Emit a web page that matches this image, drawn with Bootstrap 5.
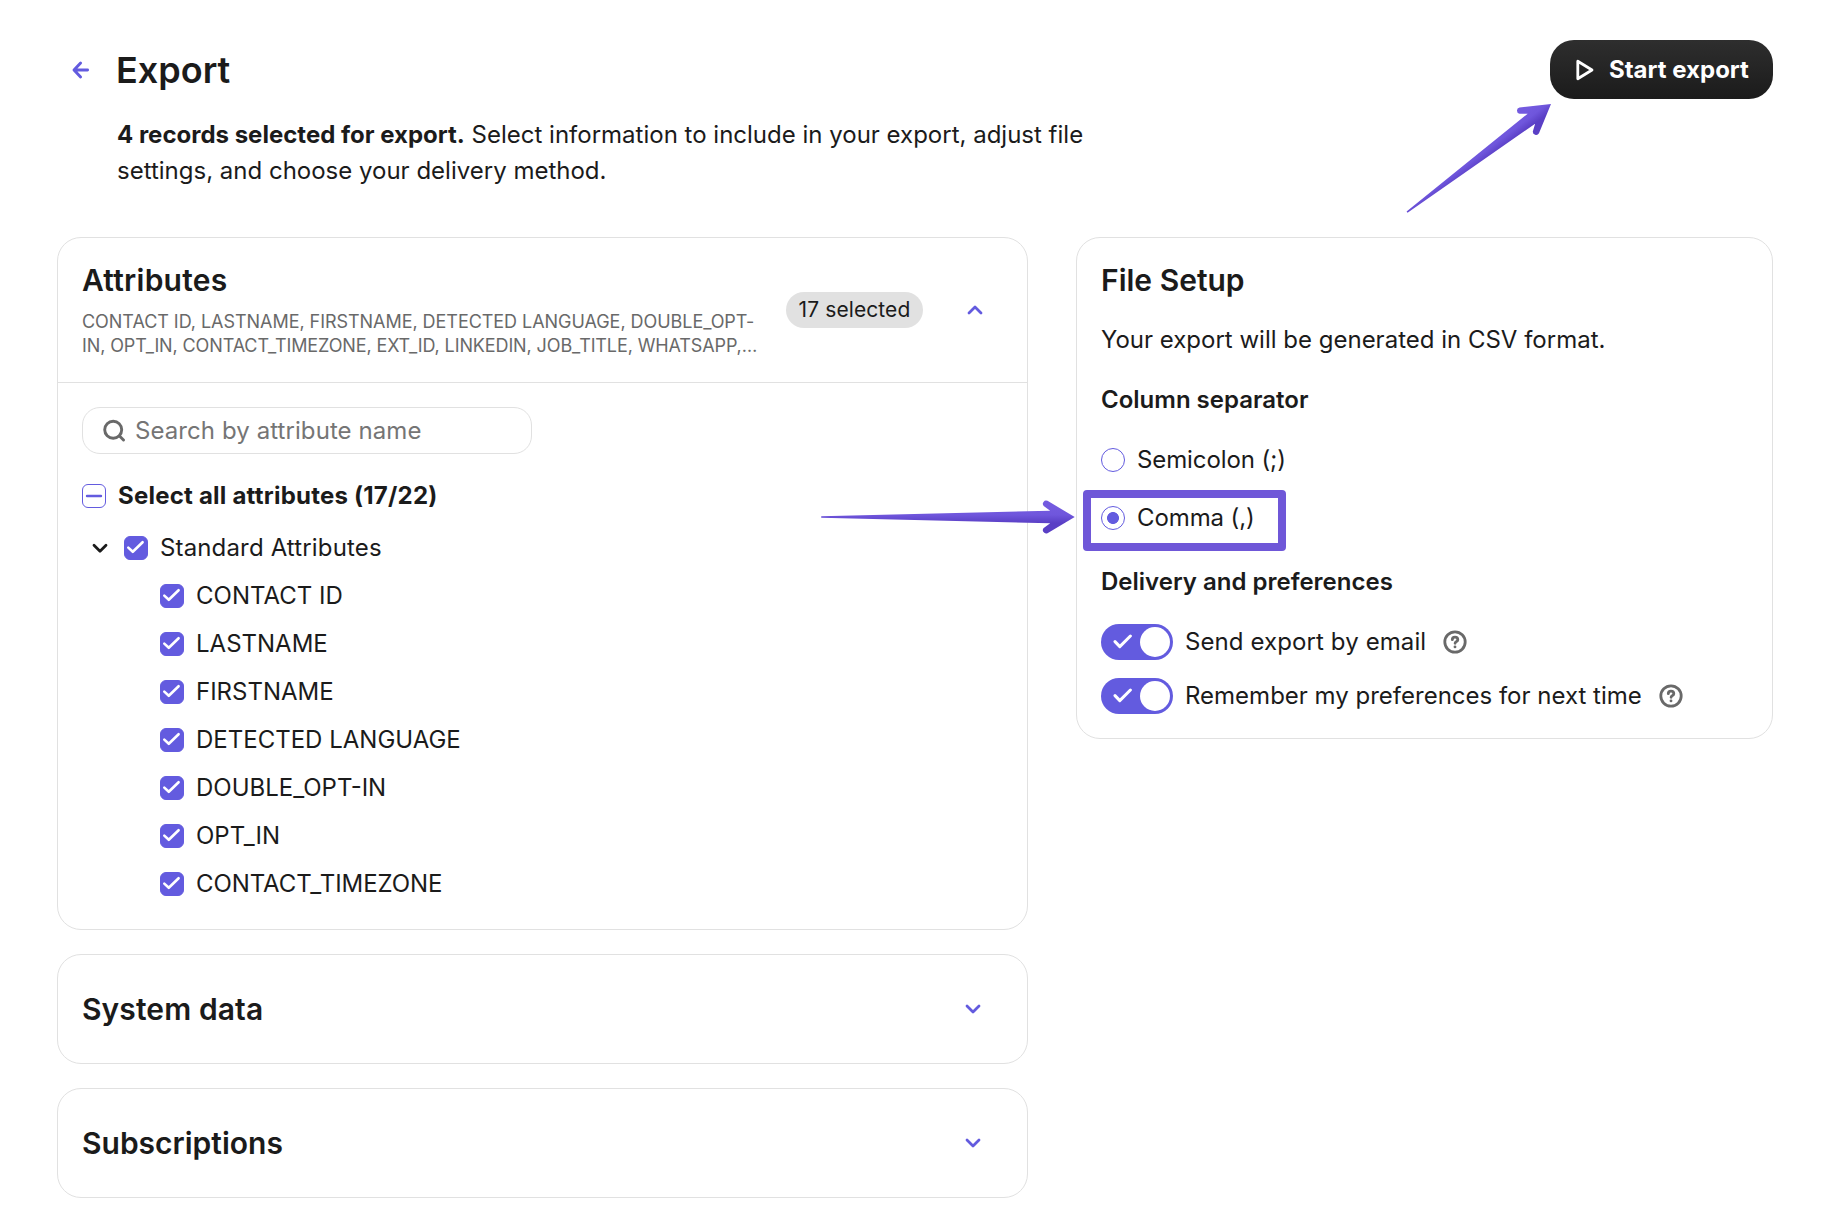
<!DOCTYPE html>
<html lang="en">
<head>
<meta charset="utf-8">
<meta name="viewport" content="width=device-width, initial-scale=1">
<title>Export</title>
<link href="https://cdn.jsdelivr.net/npm/bootstrap@5.3.0/dist/css/bootstrap.min.css" rel="stylesheet">
<style>
  :root { --brand: #635bdf; --ink: #1b1b1b; --muted: #696969; --line: #e1e1e1; }
  body { font-family: Inter, "Liberation Sans", sans-serif; font-size: 24px; line-height: 36px; color: var(--ink); background: #fff; }
  svg { display: block; flex: none; }
  .page { width: 1830px; height: 1220px; padding: 40px 57px 0; overflow: hidden; }
  .top-bar { height: 197px; }
  .back-link { margin: 20px 0 0 14px; color: var(--brand); }
  .intro { margin-left: 25px; width: 1000px; }
  .intro p { padding-left: 1px; }
  .page-title { font-size: 36px; line-height: 60px; font-weight: 600; margin: 0 0 17px; }
  .btn-start { --bs-btn-color: #fff; --bs-btn-border-width: 0; width: 223px; height: 59px; padding: 0 0 0 26px; gap: 15px; border-radius: 24px; font-size: 24px; font-weight: 700; background: linear-gradient(#2e2e2e, #1b1b1b); }
  .panel { --bs-card-border-color: var(--line); --bs-card-border-radius: 24px; --bs-card-inner-border-radius: 23px; }
  .col-main { width: 971px; gap: 24px; }
  .col-side { width: 697px; }
  .panel-title { font-size: 30px; line-height: 36px; font-weight: 600; margin: 0; }
  .panel-head { height: 144px; padding: 0 40px 0 24px; }
  .head-text { width: 690px; padding-top: 24px; }
  .summary { font-size: 18px; line-height: 24px; color: var(--muted); margin-top: 12px; }
  .pill { width: 137px; height: 36px; line-height: 36px; font-size: 21px; letter-spacing: .1px; border-radius: 18px; background: #e1e1e1; margin-top: 54px; margin-left: 14px; }
  .chev { color: var(--brand); }
  .chev-up { margin-top: 60px; }
  .panel-list { padding: 24px 24px 33px; border-top: 1px solid var(--line); }
  .search { width: 450px; height: 47px; border: 1px solid var(--line); border-radius: 18px; padding-left: 20px; gap: 9px; color: var(--muted); margin-bottom: 30px; }
  .search .form-control { border: 0; padding: 0; height: 36px; font-size: 24px; line-height: 36px; background: none; box-shadow: none; color: var(--ink); letter-spacing: .08px; }
  .search .form-control::placeholder { color: #757575; opacity: 1; }
  .tick { gap: 12px; height: 24px; }
  .tick .form-check-input, .pick .form-check-input { width: 24px; height: 24px; margin: 0; flex: none; background-color: #fff; border: 1px solid var(--brand); }
  .tick .form-check-input { border-radius: 6px; background-size: 24px 24px; background-position: -1px -1px; }
  .tick .form-check-input:checked { background-color: var(--brand); background-image: url("data:image/svg+xml,%3csvg xmlns='http://www.w3.org/2000/svg' viewBox='0 0 24 24'%3e%3cpath fill='none' stroke='%23fff' stroke-width='2.6' stroke-linecap='round' stroke-linejoin='round' d='M4.3 11.6 8.8 15.8 18.6 6.2'/%3e%3c/svg%3e"); }
  .tick .form-check-input.partial { background-image: url("data:image/svg+xml,%3csvg xmlns='http://www.w3.org/2000/svg' viewBox='0 0 24 24'%3e%3cpath stroke='%23635bdf' stroke-width='2.4' stroke-linecap='round' d='M5 12H19'/%3e%3c/svg%3e"); }
  .tree { gap: 24px; padding-left: 78px; margin-top: 24px; }
  .tree-parent { padding-left: 10px; gap: 14px; margin-top: 28px; }
  .panel-closed { height: 110px; padding: 0 46px 0 24px; }
  .setup { height: 502px; padding: 24px 24px 0; }
  .group-title { font-size: 24px; line-height: 36px; font-weight: 600; margin: 0; }
  .pick { gap: 12px; height: 24px; letter-spacing: -.1px; margin-top: 30px; }
  .pick + .pick { margin-top: 34px; margin-bottom: 34px; }
  .pick .form-check-input:checked { background-color: #fff; background-image: radial-gradient(circle, var(--brand) 5.6px, transparent 6.3px); background-size: 100% 100%; }
  .flip { height: 36px; gap: 12px; margin-top: 24px; }
  .flip + .flip { margin-top: 18px; }
  .flip-track { width: 72px; height: 36px; border-radius: 18px; background: var(--brand); padding: 0 3px 0 12px; }
  .flip-knob { width: 30px; height: 30px; border-radius: 50%; background: #fff; }
  .help { color: var(--muted); margin-left: 5px; }
  .callout-box { left: 1083px; top: 490px; width: 203px; height: 61px; border: 8px solid #6f57d8; border-radius: 4px; }
  .arrow-layer { left: 0; top: 0; pointer-events: none; }
  .t-attr { letter-spacing: .25px; }
  .t-s1 { letter-spacing: -.045px; }
  .t-s2 { letter-spacing: -.115px; }
  .t-all { letter-spacing: .22px; }
  .t-std { letter-spacing: .15px; }
  .t-sys { letter-spacing: .1px; }
  .t-send { letter-spacing: .1px; }
  .t-ctz { letter-spacing: -.08px; }
</style>
</head>
<body>
<div class="page position-relative">
  <header class="top-bar d-flex align-items-start">
    <a class="back-link" href="#" aria-label="Back">
      <svg width="20" height="20" viewBox="0 0 20 20" fill="none" stroke="currentColor" stroke-width="2.9" stroke-linecap="round" stroke-linejoin="round"><path d="M16.6 10H3.2M9.6 3 3 10l6.6 7"/></svg>
    </a>
    <div class="intro">
      <h1 class="page-title">Export</h1>
      <p class="m-0"><strong class="fw-bold">4 records selected for export.</strong> Select information to include in your export, adjust file<br>settings, and choose your delivery method.</p>
    </div>
    <button type="button" class="btn btn-start ms-auto d-flex align-items-center">
      <svg width="18" height="22" viewBox="0 0 18 22" fill="none" stroke="#fff" stroke-width="2.8" stroke-linejoin="round"><path d="M1.8 2.2v17.6L16 11z"/></svg>
      <span>Start export</span>
    </button>
  </header>

  <main class="d-flex justify-content-between align-items-start">
    <div class="col-main d-flex flex-column">
      <section class="card panel">
        <div class="panel-head d-flex align-items-start">
          <div class="head-text">
            <h2 class="panel-title t-attr">Attributes</h2>
            <div class="summary text-nowrap"><span class="t-s1">CONTACT ID, LASTNAME, FIRSTNAME, DETECTED LANGUAGE, DOUBLE_OPT-</span><br><span class="t-s2">IN, OPT_IN, CONTACT_TIMEZONE, EXT_ID, LINKEDIN, JOB_TITLE, WHATSAPP,…</span></div>
          </div>
          <span class="pill text-center text-nowrap">17 selected</span>
          <svg class="chev chev-up ms-auto" width="24" height="24" viewBox="0 0 24 24" fill="none" stroke="currentColor" stroke-width="2.8" stroke-linecap="round" stroke-linejoin="round"><path d="m6 15 6-6 6 6"/></svg>
        </div>
        <div class="panel-list">
          <div class="search d-flex align-items-center">
            <svg width="23" height="23" viewBox="0 0 23 23" fill="none" stroke="currentColor" stroke-width="2.9" stroke-linecap="round"><circle cx="10.2" cy="10.8" r="8.5"/><path d="m16.5 17 4 4"/></svg>
            <input class="form-control" type="text" placeholder="Search by attribute name" aria-label="Search by attribute name">
          </div>
          <label class="tick d-flex align-items-center"><input class="form-check-input partial" type="checkbox"><span class="fw-bold t-all">Select all attributes (17/22)</span></label>
          <div class="tree-parent d-flex align-items-center">
            <svg width="18" height="24" viewBox="0 0 18 24" fill="none" stroke="currentColor" stroke-width="2.8" stroke-linecap="round" stroke-linejoin="round"><path d="m2 9.2 6 6 6-6"/></svg>
            <label class="tick d-flex align-items-center"><input class="form-check-input" type="checkbox" checked><span class="t-std">Standard Attributes</span></label>
          </div>
          <div class="tree d-flex flex-column">
            <label class="tick d-flex align-items-center"><input class="form-check-input" type="checkbox" checked><span>CONTACT ID</span></label>
            <label class="tick d-flex align-items-center"><input class="form-check-input" type="checkbox" checked><span>LASTNAME</span></label>
            <label class="tick d-flex align-items-center"><input class="form-check-input" type="checkbox" checked><span>FIRSTNAME</span></label>
            <label class="tick d-flex align-items-center"><input class="form-check-input" type="checkbox" checked><span>DETECTED LANGUAGE</span></label>
            <label class="tick d-flex align-items-center"><input class="form-check-input" type="checkbox" checked><span>DOUBLE_OPT-IN</span></label>
            <label class="tick d-flex align-items-center"><input class="form-check-input" type="checkbox" checked><span>OPT_IN</span></label>
            <label class="tick d-flex align-items-center"><input class="form-check-input" type="checkbox" checked><span class="t-ctz">CONTACT_TIMEZONE</span></label>
          </div>
        </div>
      </section>
      <section class="card panel panel-closed flex-row align-items-center justify-content-between">
        <h2 class="panel-title t-sys">System data</h2>
        <svg class="chev" width="16" height="24" viewBox="0 0 16 24" fill="none" stroke="currentColor" stroke-width="2.8" stroke-linecap="round" stroke-linejoin="round"><path d="m2 9 6 6 6-6"/></svg>
      </section>
      <section class="card panel panel-closed flex-row align-items-center justify-content-between">
        <h2 class="panel-title">Subscriptions</h2>
        <svg class="chev" width="16" height="24" viewBox="0 0 16 24" fill="none" stroke="currentColor" stroke-width="2.8" stroke-linecap="round" stroke-linejoin="round"><path d="m2 9 6 6 6-6"/></svg>
      </section>
    </div>

    <aside class="col-side">
      <section class="card panel setup">
        <h2 class="panel-title">File Setup</h2>
        <p class="mb-4 mt-4">Your export will be generated in CSV format.</p>
        <h3 class="group-title">Column separator</h3>
        <label class="pick d-flex align-items-center"><input class="form-check-input" type="radio" name="sep"><span>Semicolon (;)</span></label>
        <label class="pick d-flex align-items-center"><input class="form-check-input" type="radio" name="sep" checked><span>Comma (,)</span></label>
        <h3 class="group-title">Delivery and preferences</h3>
        <div class="flip d-flex align-items-center">
          <span class="flip-track d-flex align-items-center justify-content-between">
            <svg width="20" height="18" viewBox="0 0 20 18" fill="none" stroke="#fff" stroke-width="3" stroke-linecap="round" stroke-linejoin="round"><path d="m2 8.6 4.8 5L17.4 3"/></svg>
            <span class="flip-knob"></span>
          </span>
          <span class="t-send">Send export by email</span>
          <svg class="help" width="24" height="24" viewBox="0 0 24 24" fill="none" stroke="currentColor" stroke-width="2.8" stroke-linecap="round" stroke-linejoin="round"><circle cx="12" cy="12" r="10.2"/><path d="M9.3 9.7C9.3 8.2 10.5 7.2 12 7.2s2.8 1 2.8 2.5c0 1.9-2.7 1.9-2.7 3.6"/><path d="M12 16.8v.1"/></svg>
        </div>
        <div class="flip d-flex align-items-center">
          <span class="flip-track d-flex align-items-center justify-content-between">
            <svg width="20" height="18" viewBox="0 0 20 18" fill="none" stroke="#fff" stroke-width="3" stroke-linecap="round" stroke-linejoin="round"><path d="m2 8.6 4.8 5L17.4 3"/></svg>
            <span class="flip-knob"></span>
          </span>
          <span>Remember my preferences for next time</span>
          <svg class="help" width="24" height="24" viewBox="0 0 24 24" fill="none" stroke="currentColor" stroke-width="2.8" stroke-linecap="round" stroke-linejoin="round"><circle cx="12" cy="12" r="10.2"/><path d="M9.3 9.7C9.3 8.2 10.5 7.2 12 7.2s2.8 1 2.8 2.5c0 1.9-2.7 1.9-2.7 3.6"/><path d="M12 16.8v.1"/></svg>
        </div>
      </section>
    </aside>
  </main>

  <div class="callout-box position-absolute"></div>
  <svg class="arrow-layer position-absolute" width="1830" height="1220" viewBox="0 0 1830 1220">
    <defs>
      <linearGradient id="shade" gradientUnits="userSpaceOnUse" x1="0" y1="-10" x2="0" y2="10"><stop offset="0" stop-color="#735adf"/><stop offset=".4" stop-color="#6f56dc"/><stop offset=".8" stop-color="#5a3fc5"/><stop offset="1" stop-color="#5a3fc5"/></linearGradient>
    </defs>
    <path fill="url(#shade)" transform="translate(1074.7 517)" d="M0 0-27.2-16.2A3.3 3.3 0 0 0-31-11L-24.5-6.2-253.5-.8V.8L-24.5 6.2-31 11A3.3 3.3 0 0 0-27.2 16.2Z"/>
    <path fill="url(#shade)" transform="translate(1551 104) rotate(-36.9)" d="M0 0-27.2-16.2A3.3 3.3 0 0 0-31-11L-24.5-6.2-180-.8V.8L-24.5 6.2-31 11A3.3 3.3 0 0 0-27.2 16.2Z"/>
  </svg>
</div>
<script src="https://cdn.jsdelivr.net/npm/bootstrap@5.3.0/dist/js/bootstrap.bundle.min.js"></script>
</body>
</html>
